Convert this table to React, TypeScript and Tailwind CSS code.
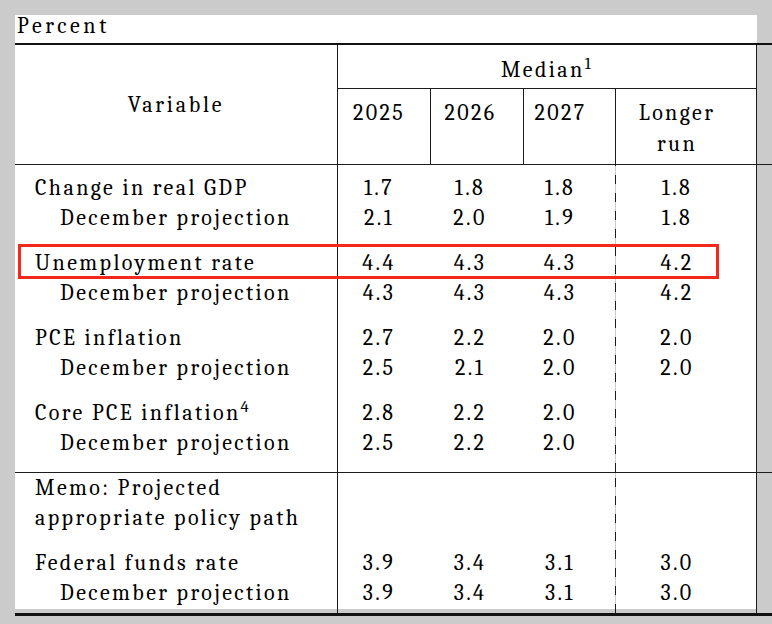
import type { ReactNode } from 'react';

type Row = { label: ReactNode; indent?: boolean; values: string[] };

const upper: Row[][] = [
  [
    { label: 'Change in real GDP', values: ['1.7', '1.8', '1.8', '1.8'] },
    { label: 'December projection', indent: true, values: ['2.1', '2.0', '1.9', '1.8'] },
  ],
  [
    { label: 'Unemployment rate', values: ['4.4', '4.3', '4.3', '4.2'] },
    { label: 'December projection', indent: true, values: ['4.3', '4.3', '4.3', '4.2'] },
  ],
  [
    { label: 'PCE inflation', values: ['2.7', '2.2', '2.0', '2.0'] },
    { label: 'December projection', indent: true, values: ['2.5', '2.1', '2.0', '2.0'] },
  ],
  [
    {
      label: (
        <>
          Core PCE inflation<sup>4</sup>
        </>
      ),
      values: ['2.8', '2.2', '2.0', ''],
    },
    { label: 'December projection', indent: true, values: ['2.5', '2.2', '2.0', ''] },
  ],
];

const lower: Row[][] = [
  [
    { label: 'Memo: Projected', values: ['', '', '', ''] },
    { label: 'appropriate policy path', values: ['', '', '', ''] },
  ],
  [
    { label: 'Federal funds rate', values: ['3.9', '3.4', '3.1', '3.0'] },
    { label: 'December projection', indent: true, values: ['3.9', '3.4', '3.1', '3.0'] },
  ],
];

function Column({
  groups,
  className,
  cell,
}: {
  groups: Row[][];
  className: string;
  cell: (r: Row) => ReactNode;
}) {
  return (
    <div className={`flex flex-col gap-[15px] bg-white ${className}`}>
      {groups.map((g, gi) => (
        <div key={gi}>
          {g.map((r, ri) => (
            <div key={ri} className="h-[30px] whitespace-nowrap">
              {cell(r)}
            </div>
          ))}
        </div>
      ))}
    </div>
  );
}

// dashed divider before the "Longer run" column
function Section({ groups, pad, dash }: { groups: Row[][]; pad: string; dash: string }) {
  return (
    <div className="flex">
      <Column
        groups={groups}
        className={`w-[322px] ${pad}`}
        cell={(r) => <div className={r.indent ? 'pl-[45px]' : 'pl-[20px]'}>{r.label}</div>}
      />
      <div className="w-px bg-[#1c1c1c]" />
      <Column groups={groups} className={`w-[92px] pr-[10px] text-center ${pad}`} cell={(r) => r.values[0]} />
      <Column groups={groups} className={`w-[93px] pr-[13px] text-center ${pad}`} cell={(r) => r.values[1]} />
      <Column groups={groups} className={`w-[92px] pr-[18px] text-center ${pad}`} cell={(r) => r.values[2]} />
      <div className={`w-px ${dash}`} />
      <Column groups={groups} className={`w-[140px] pr-[18px] text-center ${pad}`} cell={(r) => r.values[3]} />
      <div className="w-px bg-[#1c1c1c]" />
    </div>
  );
}

export default function App() {
  return (
    <div className="relative h-[624px] w-[772px] overflow-hidden bg-[#cbcbcb] pl-[15px] pt-[15px] font-serif text-[22px] leading-[30px] tracking-[2.4px] text-black">
      <div className="h-[28px] w-[742px] bg-white pl-[2px] leading-[22px] tracking-[3.6px]">Percent</div>
      <div className="h-[2px] w-[757px] bg-[#111]" />

      <div className="flex h-[119px]">
        <div className="flex w-[322px] items-center justify-center bg-white tracking-[2.8px]">Variable</div>
        <div className="w-px bg-[#1c1c1c]" />
        <div className="flex w-[418px] flex-col bg-white">
          <div className="h-[44px] border-b border-[#1c1c1c] pt-[10px] text-center">
            Median<sup>1</sup>
          </div>
          <div className="flex flex-1 leading-[31px]">
            <div className="w-[92px] pr-[10px] pt-[9px] text-center">2025</div>
            <div className="w-[93px] border-l border-[#1c1c1c] pr-[13px] pt-[9px] text-center">2026</div>
            <div className="w-[92px] border-l border-[#1c1c1c] pr-[18px] pt-[9px] text-center">2027</div>
            <div className="w-px bg-[#1c1c1c]" />
            <div className="w-[140px] pr-[18px] pt-[9px] text-center">
              Longer
              <br />
              run
            </div>
          </div>
        </div>
        <div className="w-px bg-[#1c1c1c]" />
      </div>

      <div className="h-px w-[757px] bg-[#1c1c1c]" />
      <Section
        groups={upper}
        pad="pt-[8px] pb-[14px]"
        dash="bg-[repeating-linear-gradient(to_bottom,#1c1c1c_0px,#1c1c1c_1px,transparent_1px,transparent_10px,#1c1c1c_10px,#1c1c1c_18px)]"
      />
      <div className="h-px w-[757px] bg-[#1c1c1c]" />
      <Section
        groups={lower}
        pad="pb-[1px] mb-[4px]"
        dash="bg-[repeating-linear-gradient(to_bottom,transparent_0px,transparent_5px,#1c1c1c_5px,#1c1c1c_14px,transparent_14px,transparent_18px)]"
      />
      <div className="h-[3px] w-[757px] bg-[#111]" />

      <div className="absolute left-[18px] top-[244px] h-[35px] w-[701px] border-[3px] border-[#f4291b]" />
    </div>
  );
}
